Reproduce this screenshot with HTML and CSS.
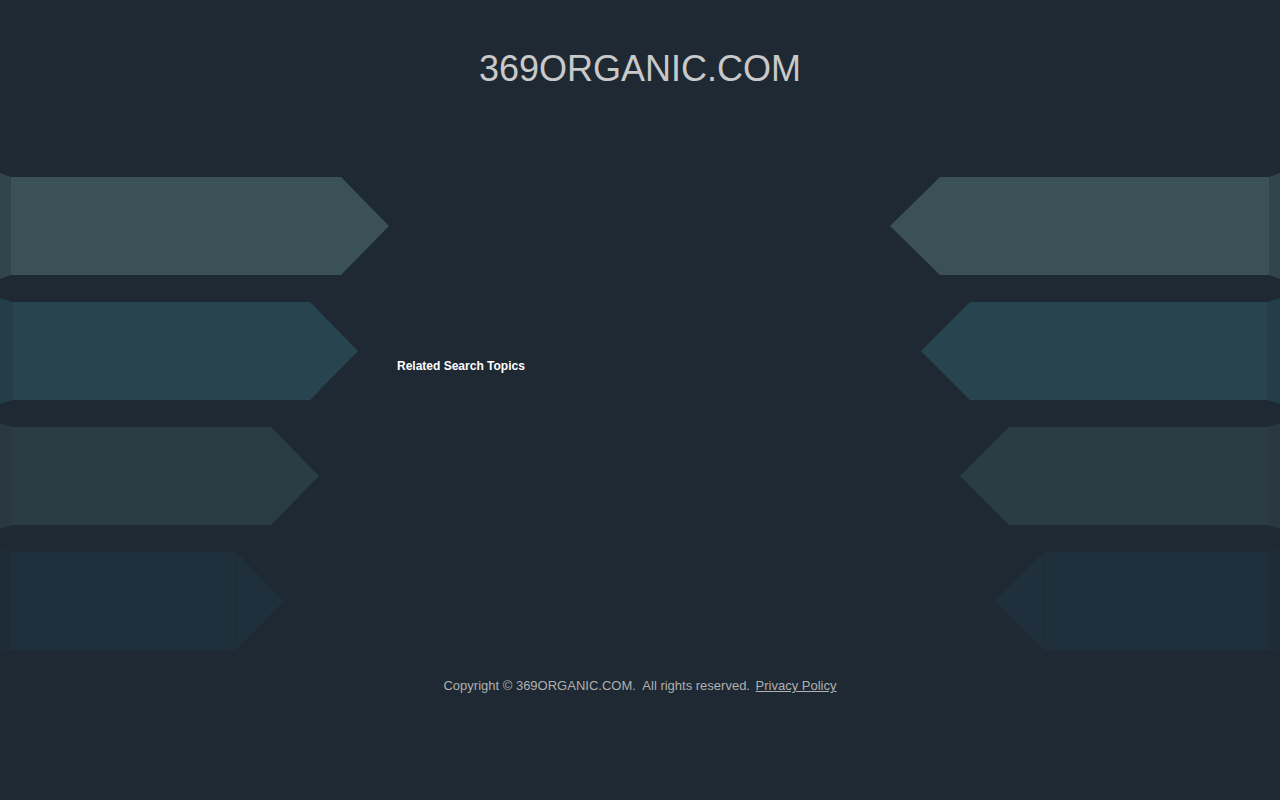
FILE: index.html
```html
<!DOCTYPE html>
<html lang="en">
<head>
<meta charset="utf-8">
<title>369ORGANIC.COM</title>
<link rel="stylesheet" href="styles.css">
</head>
<body>
<header class="header">
  <h1 class="domain">369ORGANIC.COM</h1>
</header>
<main class="stage">
  <div class="side side-left">
    <svg class="arrow" width="389" height="106" viewBox="0 0 389 106"><polygon class="a1s" points="0,0 11,4 11,102 0,106"/><polygon class="a1" points="11,4 341,4 389,53 341,102 11,102"/><line class="a1l" x1="341" y1="4" x2="341" y2="102"/></svg>
    <svg class="arrow" width="358" height="106" viewBox="0 0 358 106"><polygon class="a2s" points="0,0 13,4 13,102 0,106"/><polygon class="a2" points="13,4 310,4 358,53 310,102 13,102"/><line class="a2l" x1="310" y1="4" x2="310" y2="102"/></svg>
    <svg class="arrow" width="319" height="106" viewBox="0 0 319 106"><polygon class="a3s" points="0,0 12,4 12,102 0,106"/><polygon class="a3" points="12,4 271,4 319,53 271,102 12,102"/><line class="a3l" x1="271" y1="4" x2="271" y2="102"/></svg>
    <svg class="arrow" width="284" height="106" viewBox="0 0 284 106"><polygon class="a4s" points="0,0 11,4 11,102 0,106"/><polygon class="a4" points="11,4 236,4 284,53 236,102 11,102"/><line class="a4l" x1="236" y1="4" x2="236" y2="102"/></svg>
  </div>
  <section class="center">
    <h2 class="topics">Related Search Topics</h2>
  </section>
  <div class="side side-right">
    <svg class="arrow" width="390" height="106" viewBox="0 0 390 106"><polygon class="a1" points="0,53 50,4 379,4 379,102 50,102"/><polygon class="a1s" points="379,4 390,0 390,106 379,102"/><line class="a1l" x1="50" y1="4" x2="50" y2="102"/></svg>
    <svg class="arrow" width="359" height="106" viewBox="0 0 359 106"><polygon class="a2" points="0,53 49,4 346,4 346,102 49,102"/><polygon class="a2s" points="346,4 359,0 359,106 346,102"/><line class="a2l" x1="49" y1="4" x2="49" y2="102"/></svg>
    <svg class="arrow" width="320" height="106" viewBox="0 0 320 106"><polygon class="a3" points="0,53 49,4 308,4 308,102 49,102"/><polygon class="a3s" points="308,4 320,0 320,106 308,102"/><line class="a3l" x1="49" y1="4" x2="49" y2="102"/></svg>
    <svg class="arrow" width="285" height="106" viewBox="0 0 285 106"><polygon class="a4" points="0,53 49,4 273,4 273,102 49,102"/><polygon class="a4s" points="273,4 285,0 285,106 273,102"/><line class="a4l" x1="49" y1="4" x2="49" y2="102"/></svg>
  </div>
</main>
<footer class="footer">
  <span>Copyright © 369ORGANIC.COM.&nbsp; All rights reserved.&nbsp;</span><a class="privacy" href="#">Privacy Policy</a>
</footer>
</body>
</html>
```

FILE: styles.css
```css
html, body {
  margin: 0;
  padding: 0;
}
body {
  background: #1e2933;
  font-family: "Liberation Sans", Arial, sans-serif;
  width: 1280px;
  height: 800px;
  overflow: hidden;
}
.header {
  height: 173px;
  display: flex;
  justify-content: center;
}
.domain {
  margin: 47px 0 0 0;
  font-size: 36px;
  font-weight: normal;
  line-height: 44px;
  color: #c9c9c9;
}
.stage {
  display: grid;
  grid-template-columns: 389px 1fr 390px;
  column-gap: 8px;
}
.side {
  display: flex;
  flex-direction: column;
  gap: 19px;
}
.side-left { align-items: flex-start; }
.side-right { align-items: flex-end; }
.arrow { display: block; }
.center {
  padding-top: 184px;
}
.topics {
  margin: 0;
  font-size: 12px;
  line-height: 18px;
  font-weight: bold;
  color: #ffffff;
}
.a1 { fill: #3a5257; }
.a1s { fill: #31464c; }
.a1l { stroke: #384f54; stroke-width: 1; }
.a2 { fill: #27444f; }
.a2s { fill: #253d48; }
.a2l { stroke: #26424d; stroke-width: 1; }
.a3 { fill: #2b3d44; }
.a3s { fill: #29393f; }
.a3l { stroke: #2a3b42; stroke-width: 1; }
.a4 { fill: #1f2f3b; }
.a4s { fill: #1f2c37; }
.a4l { stroke: #1e2e39; stroke-width: 1; }
.footer {
  margin-top: 24px;
  text-align: center;
  font-size: 13px;
  line-height: 16px;
  color: #b0b0b0;
}
.privacy {
  color: #b0b0b0;
  text-decoration: underline;
  margin-left: 2px;
}
```
